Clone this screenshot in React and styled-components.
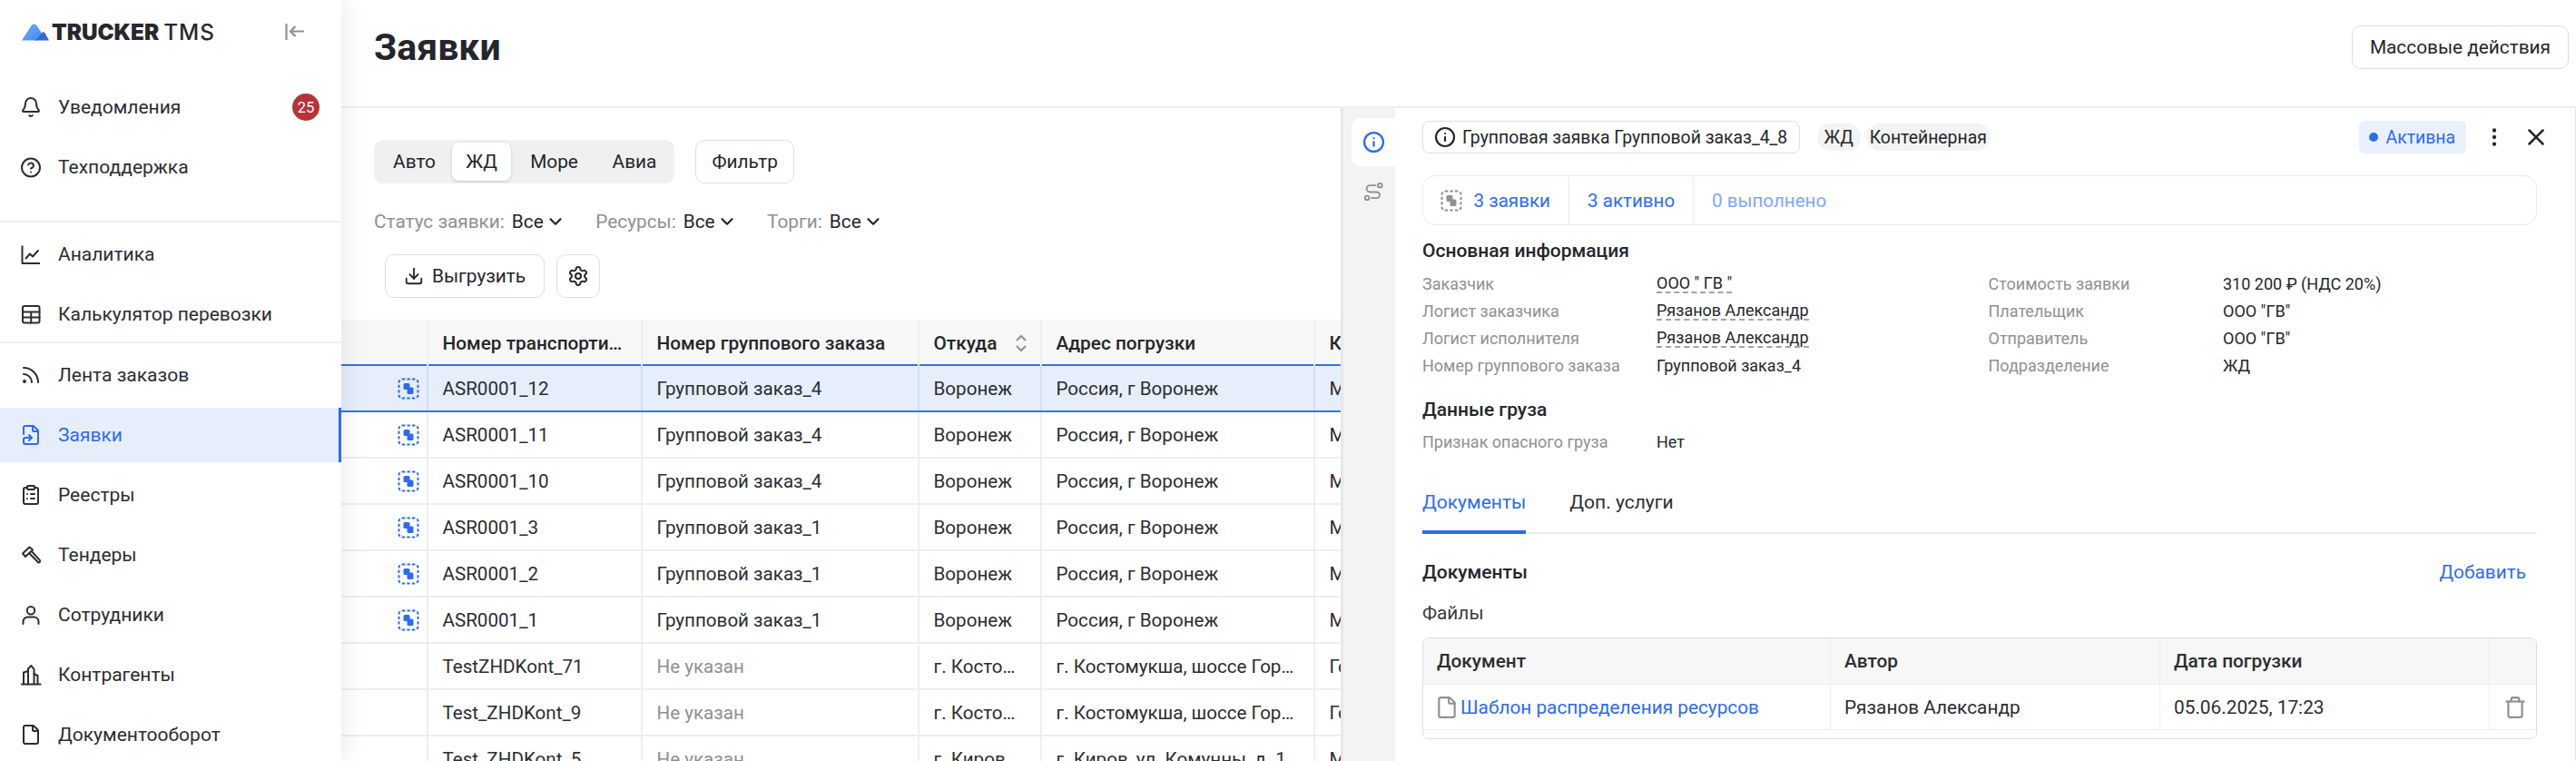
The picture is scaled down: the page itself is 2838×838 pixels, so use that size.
import React from "react";
import styled, { createGlobalStyle } from "styled-components";
import { Bell, CircleHelp, Rss, FileSymlink, ClipboardList, File, Settings, Download, ChevronDown, X, EllipsisVertical, Trash, Info } from "lucide-react";

const Global = createGlobalStyle`
  html, body { margin: 0; padding: 0; background: #fff; }
  #root { width: 2838px; height: 838px; overflow: hidden; }
  * { box-sizing: border-box; }
  body { font-family: Roboto, "Liberation Sans", sans-serif; color: #24262b; }
`;

const BLUE = "#2f6bf0";

const Page = styled.div`
  display: flex;
  width: 2838px;
  height: 838px;
  overflow: hidden;
  background: #fff;
`;

const Sidebar = styled.aside`
  position: relative;
  z-index: 2;
  flex: 0 0 376px;
  background: #fff;
  box-shadow: 2px 0 26px rgba(0, 0, 0, 0.09);
`;

const LogoRow = styled.div`
  display: flex;
  align-items: center;
  height: 88px;
  padding: 0 41px 18px 24px;
`;

const LogoText = styled.div`
  display: flex;
  gap: 5px;
  margin-left: 3px;
  font-family: Inter, sans-serif;
  font-size: 24.3px;
  line-height: 24px;
  color: #26282c;
`;
const LogoStrong = styled.span`font-weight: 900;`;
const LogoLight = styled.span`
  font-weight: 500;
  letter-spacing: 1px;
`;
const CollapseBtn = styled.div`
  display: flex;
  margin-left: auto;
  color: #8f9197;
`;

const NavGroup = styled.div`
  display: flex;
  flex-direction: column;
  gap: 6px;
  padding-top: ${(p) => p.$pt || 0}px;
  padding-bottom: ${(p) => p.$pb || 0}px;
  border-bottom: ${(p) => (p.$line ? "2px solid #eeeeee" : "none")};
`;

const NavRow = styled.div`
  display: flex;
  align-items: center;
  height: 60px;
  padding-left: 22px;
  padding-right: 21px;
  font-size: 21px;
  color: ${(p) => (p.$active ? BLUE : "#2b2d31")};
  background: ${(p) => (p.$active ? "#e6eefc" : "transparent")};
  border-right: 3px solid ${(p) => (p.$active ? BLUE : "transparent")};
`;
const NavIcon = styled.span`
  display: flex;
  justify-content: center;
  width: 24px;
  margin-right: 18px;
`;
const Badge = styled.span`
  display: flex;
  align-items: center;
  justify-content: center;
  width: 30px;
  height: 30px;
  margin-left: auto;
  border-radius: 50%;
  background: #b83338;
  color: #fff;
  font-size: 16.5px;
`;

const Main = styled.main`
  flex: 1;
  min-width: 0;
  display: flex;
  flex-direction: column;
`;

const Header = styled.header`
  flex: 0 0 119px;
  display: flex;
  align-items: flex-start;
  justify-content: space-between;
  padding: 28px 8px 0 36px;
  border-bottom: 2px solid #efefef;
`;
const Title = styled.h1`
  margin: 0;
  font-size: 41px;
  line-height: 48px;
  font-weight: 700;
  color: #24262b;
`;
const OutlineButton = styled.button`
  display: inline-flex;
  align-items: center;
  justify-content: center;
  gap: ${(p) => p.$gap ?? 12}px;
  height: 48px;
  padding: 0 ${(p) => p.$px ?? 19}px;
  border: 1.5px solid #dedede;
  border-radius: 10px;
  background: #fff;
  font-family: inherit;
  font-size: 20.8px;
  color: #24262b;
`;

const Body = styled.div`
  flex: 1;
  min-height: 0;
  display: flex;
`;

const ListPane = styled.section`
  flex: 0 0 1101px;
  overflow: hidden;
  padding-top: 35px;
`;
const TopControls = styled.div`
  display: flex;
  gap: 23px;
  padding-left: 36px;
`;
const Segmented = styled.div`
  display: flex;
  align-items: center;
  height: 48px;
  padding: 0 3px;
  border-radius: 10px;
  background: #f0f0f0;
`;
const Segment = styled.div`
  display: flex;
  align-items: center;
  justify-content: center;
  width: ${(p) => p.$w}px;
  height: 42px;
  border-radius: 8px;
  font-size: 20.8px;
  background: ${(p) => (p.$active ? "#fff" : "transparent")};
  box-shadow: ${(p) => (p.$active ? "0 1px 3px rgba(0,0,0,.18)" : "none")};
`;
const FilterRow = styled.div`
  display: flex;
  align-items: center;
  gap: 33.5px;
  height: 24px;
  margin-top: 30px;
  padding-left: 36px;
  font-size: 20.8px;
`;
const FilterItem = styled.div`
  display: flex;
  align-items: center;
`;
const FilterLabel = styled.span`
  color: #8e9095;
  margin-right: 8px;
`;
const FilterChevron = styled(ChevronDown)`
  margin-left: 2px;
`;
const ActionsRow = styled.div`
  display: flex;
  gap: 13px;
  margin-top: 24px;
  padding-left: 48px;
`;
const Table = styled.div`
  margin-top: 24px;
  width: 1200px;
`;
const GRID = "96px 236px 305px 135px 301px 200px";
const HeadRow = styled.div`
  display: grid;
  grid-template-columns: ${GRID};
  height: 51px;
  background: #f7f7f7;
`;
const Row = styled.div`
  display: grid;
  grid-template-columns: ${GRID};
  height: 51px;
  border-bottom: 2px solid ${(p) => (p.$selected ? "#3a70dc" : "#eeeeee")};
  background: ${(p) => (p.$selected ? "#e6eefc" : "#fff")};
  box-shadow: ${(p) => (p.$selected ? "0 -2px 0 #3a70dc" : "none")};
`;
const HeadCell = styled.div`
  display: flex;
  align-items: center;
  justify-content: space-between;
  padding: 0 14px 0 15.5px;
  border-right: 2px solid #eeeeee;
  font-size: 20.8px;
  font-weight: 500;
  white-space: nowrap;
  overflow: hidden;
`;
const Cell = styled.div`
  display: flex;
  align-items: center;
  padding: 0 14px 0 15.5px;
  border-right: 2px solid ${(p) => (p.$selected ? "#cfe0f8" : "#eeeeee")};
  font-size: 20.6px;
  white-space: nowrap;
  overflow: hidden;
  color: ${(p) => (p.$muted ? "#8e9095" : "#2b2d31")};
`;
const IconCell = styled(Cell)`
  justify-content: flex-end;
  padding: 0 8.5px 0 0;
`;
const Ellipsis = styled.span`
  overflow: hidden;
  text-overflow: ellipsis;
`;

const Detail = styled.aside`
  flex: 1;
  min-width: 0;
  display: flex;
  border-left: 3px solid #e8e8e8;
  border-right: 1px solid #e4e4e4;
`;
const Rail = styled.nav`
  flex: 0 0 57px;
  display: flex;
  flex-direction: column;
  align-items: flex-end;
  padding-top: 11px;
  background: #f3f3f3;
`;
const RailTab = styled.div`
  display: flex;
  align-items: center;
  justify-content: center;
  width: 48px;
  height: ${(p) => p.$h}px;
  border-radius: 10px 0 0 10px;
  background: ${(p) => (p.$active ? "#fff" : "transparent")};
`;
const DetailBody = styled.div`
  flex: 1;
  min-width: 0;
  padding: 14px 42px 0 30px;
`;
const TopBar = styled.div`
  display: flex;
  align-items: center;
  height: 36px;
`;
const TitleChip = styled.div`
  display: flex;
  align-items: center;
  gap: 7px;
  height: 36px;
  padding: 0 13px 0 12px;
  border: 1.5px solid #dedede;
  border-radius: 8px;
  font-size: 19.4px;
  white-space: nowrap;
`;
const Pill = styled.div`
  display: flex;
  align-items: center;
  justify-content: center;
  width: ${(p) => p.$w}px;
  height: 30px;
  margin-left: ${(p) => p.$ml}px;
  border-radius: 15px;
  background: #f3f3f3;
  font-size: 19.4px;
`;
const StatusChip = styled.div`
  display: flex;
  align-items: center;
  gap: 9px;
  height: 36px;
  margin-left: auto;
  padding: 0 12px 0 11px;
  border-radius: 6px;
  background: #e8f1fd;
  color: #2f6bf0;
  font-size: 19.4px;
`;
const Dot = styled.span`
  width: 10px;
  height: 10px;
  border-radius: 50%;
  background: ${BLUE};
`;
const TopActions = styled.div`
  display: flex;
  align-items: center;
  gap: 18.4px;
  margin-left: 17.6px;
  margin-right: -14px;
`;
const StatBar = styled.div`
  display: flex;
  align-items: stretch;
  height: 55px;
  margin-top: 24px;
  border: 1.5px solid #eaeaea;
  border-radius: 14px;
`;
const Stat = styled.div`
  display: flex;
  align-items: center;
  gap: 13px;
  width: ${(p) => (p.$w ? `${p.$w}px` : "auto")};
  padding-left: ${(p) => p.$pl}px;
  font-size: 20.6px;
  color: ${(p) => p.$color};
  border-right: ${(p) => (p.$last ? "none" : "1.5px solid #eaeaea")};
`;
const SectionTitle = styled.h3`
  margin: ${(p) => p.$mt}px 0 ${(p) => p.$mb}px;
  font-size: 21px;
  line-height: 24px;
  font-weight: 500;
  color: #24262b;
`;
const InfoGrid = styled.div`
  display: grid;
  grid-template-columns: 258px 365.5px 258.5px 1fr;
  grid-auto-rows: 30px;
  align-items: center;
  font-size: 18px;
`;
const InfoLabel = styled.div`
  color: #8e9095;
`;
const InfoValue = styled.div`
  color: #24262b;
`;
const Dashed = styled.span`
  display: inline-block;
  line-height: 18px;
  border-bottom: 2px dashed #a2a4a8;
`;
const TabBar = styled.div`
  display: flex;
  gap: 48px;
  margin-top: 20px;
  border-bottom: 2px solid #eeeeee;
`;
const Tab = styled.div`
  padding: 20px 0 19px;
  line-height: 24px;
  font-size: 21px;
  color: ${(p) => (p.$active ? BLUE : "#2b2d31")};
  border-bottom: 4px solid ${(p) => (p.$active ? BLUE : "transparent")};
  margin-bottom: -2px;
`;
const DocHead = styled.div`
  display: flex;
  align-items: center;
  justify-content: space-between;
  height: 24px;
  margin-top: 30px;
  padding-right: 12px;
`;
const DocTitle = styled.div`
  font-size: 21px;
  font-weight: 500;
`;
const AddLink = styled.div`
  font-size: 20.8px;
  color: ${BLUE};
`;
const FilesLabel = styled.div`
  margin-top: 21px;
  line-height: 24px;
  font-size: 20.8px;
  color: #3a3c40;
`;
const DocTable = styled.div`
  margin-top: 15px;
  height: 112px;
  border: 1.5px solid #dddde0;
  border-radius: 7px;
  overflow: hidden;
`;
const DOCGRID = "449px 363px 363px 1fr";
const DocHeadRow = styled.div`
  display: grid;
  grid-template-columns: ${DOCGRID};
  height: 51px;
  background: #f7f7f7;
  border-bottom: 1.5px solid #eeeeee;
`;
const DocRow = styled.div`
  display: grid;
  grid-template-columns: ${DOCGRID};
  height: 50px;
  border-bottom: 1.5px solid #eeeeee;
`;
const DocCell = styled.div`
  display: flex;
  align-items: center;
  gap: 6px;
  padding: 0 15px;
  border-right: ${(p) => (p.$last ? "none" : "1.5px solid #eeeeee")};
  font-size: 20.8px;
  font-weight: ${(p) => (p.$head ? 500 : 400)};
  color: ${(p) => (p.$link ? BLUE : "#2b2d31")};
  white-space: nowrap;
`;
const DocIcon = styled(File)`
  margin: 0 -4px 0 -2px;
`;

const GroupIcon = ({ color = BLUE, size = 24 }) => (
  <svg width={size} height={size} viewBox="0 0 24 24" fill="none">
    <rect x="1.5" y="1.5" width="21" height="21" rx="3.5" stroke={color} strokeWidth="2" strokeDasharray="3.4 2.1" />
    <rect x="6.5" y="6" width="7" height="7" rx="1.6" fill={color} />
    <rect x="10.5" y="10.5" width="7" height="7.5" rx="1.6" fill={color} />
  </svg>
);

const LogoMark = () => (
  <svg width="30" height="19" viewBox="0 0 30 19">
    <defs>
      <linearGradient id="lg1" x1="0" y1="0" x2="1" y2="1">
        <stop offset="0" stopColor="#6fb0fb" />
        <stop offset="1" stopColor="#3f86f2" />
      </linearGradient>
    </defs>
    <path d="M0 18.4 L11 1.6 Q13.5 -0.8 16 1.6 L23 12 L17 18.4 Z" fill="url(#lg1)" />
    <path d="M15 18.4 L23 9.6 Q24 8.8 25 9.6 L30 18.4 Z" fill="#2f6ad8" />
  </svg>
);

const CollapseIcon = () => (
  <svg width="21" height="20" viewBox="0 0 21 20" fill="none" stroke="currentColor" strokeWidth="2.2">
    <path d="M1.5 1v18" />
    <path d="M21 9.5H6.5M11.5 4l-5.5 5.5 5.5 5.5" />
  </svg>
);

const Svg = ({ children, size = 24 }) => (
  <svg width={size} height={size} viewBox="0 0 24 24" fill="none" stroke="currentColor" strokeWidth="2" strokeLinecap="round" strokeLinejoin="round">
    {children}
  </svg>
);

const ChartIcon = () => (
  <Svg><path d="M2.5 2.5V22H22" strokeLinecap="butt" /><path d="M6.5 16.5l4.5-5 3 3 6-6.5" /></Svg>
);
const TableIcon = () => (
  <Svg><rect x="3" y="3" width="18.5" height="18.5" rx="2" /><path d="M3 9.5h18.5M3 15.5h18.5M12.2 9.5v12" /></Svg>
);
const HammerIcon = () => (
  <Svg><path d="M10.5 3.5 3 10.5l3 3.5 8-7.5z" /><path d="M10.5 10.5l9.5 9.8a1.6 1.6 0 0 0 2-2.2l-9-9.8" /></Svg>
);
const PersonIcon = () => (
  <Svg><circle cx="12" cy="7.2" r="4.2" /><path d="M3.5 22v-2.5a5 5 0 0 1 5-5h7a5 5 0 0 1 5 5V22" /></Svg>
);
const OrgIcon = () => (
  <Svg><path d="M2 22.5h20.5" /><path d="M4 22V9.5l5-1.5V22" /><path d="M9 22V5.5L12.5 2 15.5 6V22" /><path d="M15.5 11l4 2V22" /></Svg>
);
const RouteIcon = () => (
  <svg width="22" height="22" viewBox="0 0 24 24" fill="none" stroke="#8e9095" strokeWidth="2">
    <circle cx="20" cy="4.5" r="2.5" />
    <circle cx="4.5" cy="19.5" r="2.5" />
    <path d="M15.5 4.5H8a4 4 0 0 0 0 8h8a3.6 3.6 0 0 1 0 7.2H9" />
  </svg>
);
const SortIcon = () => (
  <svg width="14" height="20" viewBox="0 0 14 20" fill="none" stroke="#8e9095" strokeWidth="2">
    <path d="M2 7l5-5 5 5M2 13l5 5 5-5" />
  </svg>
);

const nav1 = [
  { label: "Уведомления", icon: <Bell size={26} />, badge: "25" },
  { label: "Техподдержка", icon: <CircleHelp size={27} /> },
];
const nav2 = [
  { label: "Аналитика", icon: <ChartIcon /> },
  { label: "Калькулятор перевозки", icon: <TableIcon /> },
];
const nav3 = [
  { label: "Лента заказов", icon: <Rss size={26} /> },
  { label: "Заявки", icon: <FileSymlink size={24} />, active: true },
  { label: "Реестры", icon: <ClipboardList size={24} /> },
  { label: "Тендеры", icon: <HammerIcon /> },
  { label: "Сотрудники", icon: <PersonIcon /> },
  { label: "Контрагенты", icon: <OrgIcon /> },
  { label: "Документооборот", icon: <File size={26} /> },
];

const rows = [
  { no: "ASR0001_12", group: "Групповой заказ_4", from: "Воронеж", addr: "Россия, г Воронеж", to: "Москва", icon: true, selected: true },
  { no: "ASR0001_11", group: "Групповой заказ_4", from: "Воронеж", addr: "Россия, г Воронеж", to: "Москва", icon: true },
  { no: "ASR0001_10", group: "Групповой заказ_4", from: "Воронеж", addr: "Россия, г Воронеж", to: "Москва", icon: true },
  { no: "ASR0001_3", group: "Групповой заказ_1", from: "Воронеж", addr: "Россия, г Воронеж", to: "Москва", icon: true },
  { no: "ASR0001_2", group: "Групповой заказ_1", from: "Воронеж", addr: "Россия, г Воронеж", to: "Москва", icon: true },
  { no: "ASR0001_1", group: "Групповой заказ_1", from: "Воронеж", addr: "Россия, г Воронеж", to: "Москва", icon: true },
  { no: "TestZHDKont_71", group: "Не указан", from: "г. Костомукша", addr: "г. Костомукша, шоссе Горняков, д. 1", to: "Гомель" },
  { no: "Test_ZHDKont_9", group: "Не указан", from: "г. Костомукша", addr: "г. Костомукша, шоссе Горняков, д. 1", to: "Гомель" },
  { no: "Test_ZHDKont_5", group: "Не указан", from: "г. Киров", addr: "г. Киров, ул. Комунны, д. 1", to: "Москва" },
];

const info = [
  ["Заказчик", 'ООО " ГВ "', true, "Стоимость заявки", "310 200 ₽ (НДС 20%)"],
  ["Логист заказчика", "Рязанов Александр", true, "Плательщик", 'ООО "ГВ"'],
  ["Логист исполнителя", "Рязанов Александр", true, "Отправитель", 'ООО "ГВ"'],
  ["Номер группового заказа", "Групповой заказ_4", false, "Подразделение", "ЖД"],
];

const filters = ["Статус заявки:", "Ресурсы:", "Торги:"];

const NavList = ({ items }) =>
  items.map((n) => (
    <NavRow key={n.label} $active={n.active}>
      <NavIcon>{n.icon}</NavIcon>
      {n.label}
      {n.badge && <Badge>{n.badge}</Badge>}
    </NavRow>
  ));

export default function App() {
  return (
    <Page>
      <Global />
      <Sidebar>
        <LogoRow>
          <LogoMark />
          <LogoText>
            <LogoStrong>TRUCKER</LogoStrong>
            <LogoLight>TMS</LogoLight>
          </LogoText>
          <CollapseBtn><CollapseIcon /></CollapseBtn>
        </LogoRow>
        <NavGroup $line $pb={29}><NavList items={nav1} /></NavGroup>
        <NavGroup $line $pt={5}><NavList items={nav2} /></NavGroup>
        <NavGroup $pt={5}><NavList items={nav3} /></NavGroup>
      </Sidebar>

      <Main>
        <Header>
          <Title>Заявки</Title>
          <OutlineButton>Массовые действия</OutlineButton>
        </Header>
        <Body>
          <ListPane>
            <TopControls>
              <Segmented>
                <Segment $w={83}>Авто</Segment>
                <Segment $w={65} $active>ЖД</Segment>
                <Segment $w={95}>Море</Segment>
                <Segment $w={82}>Авиа</Segment>
              </Segmented>
              <OutlineButton $px={17.5}>Фильтр</OutlineButton>
            </TopControls>
            <FilterRow>
              {filters.map((f) => (
                <FilterItem key={f}>
                  <FilterLabel>{f}</FilterLabel>
                  Все
                  <FilterChevron size={22} strokeWidth={2.4} />
                </FilterItem>
              ))}
            </FilterRow>
            <ActionsRow>
              <OutlineButton $px={20} $gap={9}><Download size={22} />Выгрузить</OutlineButton>
              <OutlineButton $px={11}><Settings size={24} /></OutlineButton>
            </ActionsRow>
            <Table>
              <HeadRow>
                <HeadCell />
                <HeadCell><Ellipsis>Номер транспорти…</Ellipsis></HeadCell>
                <HeadCell>Номер группового заказа</HeadCell>
                <HeadCell>Откуда<SortIcon /></HeadCell>
                <HeadCell>Адрес погрузки</HeadCell>
                <HeadCell>Куда</HeadCell>
              </HeadRow>
              {rows.map((r) => (
                <Row key={r.no} $selected={r.selected}>
                  <IconCell $selected={r.selected}>{r.icon && <GroupIcon />}</IconCell>
                  <Cell $selected={r.selected}>{r.no}</Cell>
                  <Cell $selected={r.selected} $muted={r.group === "Не указан"}>{r.group}</Cell>
                  <Cell $selected={r.selected}><Ellipsis>{r.from}</Ellipsis></Cell>
                  <Cell $selected={r.selected}><Ellipsis>{r.addr}</Ellipsis></Cell>
                  <Cell $selected={r.selected}>{r.to}</Cell>
                </Row>
              ))}
            </Table>
          </ListPane>

          <Detail>
            <Rail>
              <RailTab $active $h={53}><Info size={25} color={BLUE} strokeWidth={2.2} /></RailTab>
              <RailTab $h={56}><RouteIcon /></RailTab>
            </Rail>
            <DetailBody>
              <TopBar>
                <TitleChip><Info size={24} strokeWidth={2.2} />Групповая заявка Групповой заказ_4_8</TitleChip>
                <Pill $ml={18.5} $w={48}>ЖД</Pill>
                <Pill $ml={6} $w={137}>Контейнерная</Pill>
                <StatusChip><Dot />Активна</StatusChip>
                <TopActions>
                  <EllipsisVertical size={26} />
                  <X size={30} />
                </TopActions>
              </TopBar>
              <StatBar>
                <Stat $color={BLUE} $w={161} $pl={18.5}><GroupIcon color="#8e9095" />3 заявки</Stat>
                <Stat $color={BLUE} $w={137} $pl={20}>3 активно</Stat>
                <Stat $color="#7da8f8" $last $pl={20}>0 выполнено</Stat>
              </StatBar>
              <SectionTitle $mt={16} $mb={9}>Основная информация</SectionTitle>
              <InfoGrid>
                {info.map(([l1, v1, dash, l2, v2]) => (
                  <React.Fragment key={l1}>
                    <InfoLabel>{l1}</InfoLabel>
                    <InfoValue>{dash ? <Dashed>{v1}</Dashed> : v1}</InfoValue>
                    <InfoLabel>{l2}</InfoLabel>
                    <InfoValue>{v2}</InfoValue>
                  </React.Fragment>
                ))}
              </InfoGrid>
              <SectionTitle $mt={22} $mb={8}>Данные груза</SectionTitle>
              <InfoGrid>
                <InfoLabel>Признак опасного груза</InfoLabel>
                <InfoValue>Нет</InfoValue>
              </InfoGrid>
              <TabBar>
                <Tab $active>Документы</Tab>
                <Tab>Доп. услуги</Tab>
              </TabBar>
              <DocHead>
                <DocTitle>Документы</DocTitle>
                <AddLink>Добавить</AddLink>
              </DocHead>
              <FilesLabel>Файлы</FilesLabel>
              <DocTable>
                <DocHeadRow>
                  <DocCell $head>Документ</DocCell>
                  <DocCell $head>Автор</DocCell>
                  <DocCell $head>Дата погрузки</DocCell>
                  <DocCell $last />
                </DocHeadRow>
                <DocRow>
                  <DocCell $link><DocIcon size={26} color="#8e9095" />Шаблон распределения ресурсов</DocCell>
                  <DocCell>Рязанов Александр</DocCell>
                  <DocCell>05.06.2025, 17:23</DocCell>
                  <DocCell $last><Trash size={26} color="#8e9095" /></DocCell>
                </DocRow>
              </DocTable>
            </DetailBody>
          </Detail>
        </Body>
      </Main>
    </Page>
  );
}
